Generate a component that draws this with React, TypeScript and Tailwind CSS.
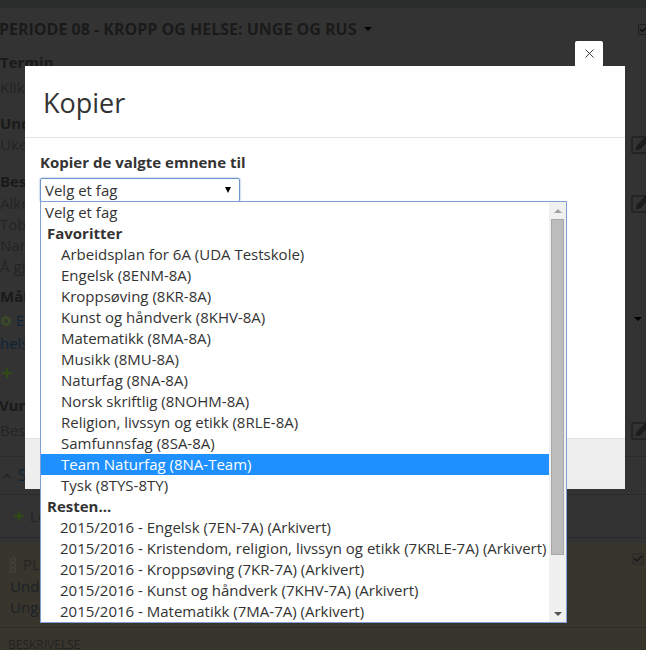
import { Check, ChevronUp, Pencil, Plus, X } from "lucide-react";

const favoritter = [
  "Arbeidsplan for 6A (UDA Testskole)",
  "Engelsk (8ENM-8A)",
  "Kroppsøving (8KR-8A)",
  "Kunst og håndverk (8KHV-8A)",
  "Matematikk (8MA-8A)",
  "Musikk (8MU-8A)",
  "Naturfag (8NA-8A)",
  "Norsk skriftlig (8NOHM-8A)",
  "Religion, livssyn og etikk (8RLE-8A)",
  "Samfunnsfag (8SA-8A)",
  "Team Naturfag (8NA-Team)",
  "Tysk (8TYS-8TY)",
];

const resten = [
  "2015/2016 - Engelsk (7EN-7A) (Arkivert)",
  "2015/2016 - Kristendom, religion, livssyn og etikk (7KRLE-7A) (Arkivert)",
  "2015/2016 - Kroppsøving (7KR-7A) (Arkivert)",
  "2015/2016 - Kunst og håndverk (7KHV-7A) (Arkivert)",
  "2015/2016 - Matematikk (7MA-7A) (Arkivert)",
];

function EditBox() {
  return (
    <div className="relative w-[20px] h-[18px] mt-[2px] mr-[-5px] border-2 border-[#242424] rounded-[2px]">
      <Pencil size={16} className="absolute left-[2px] top-[-3px] text-[#1d1d1d] fill-[#1d1d1d]" />
    </div>
  );
}

function Background() {
  return (
    <div className="absolute inset-0 bg-[#333333] text-[#242424] text-[15px] leading-[21px] overflow-hidden">
      <div className="h-[8px] bg-[#2b2d2d]" />
      <div className="flex items-center h-[42px]">
        <span className="font-bold text-[16px] text-[#1a1a1a] ml-[-1px]">PERIODE 08 - KROPP OG HELSE: UNGE OG RUS</span>
        <span className="ml-[8px] mt-[-1px] border-x-[4px] border-x-transparent border-t-[4px] border-t-black" />
        <div className="ml-auto w-[12px] h-[11px] mr-[-4px] border border-[#1d1d1d] rounded-[2px]">
          <Check size={9} className="text-[#111]" strokeWidth={4} />
        </div>
      </div>
      <div className="pt-[2px]">
        <div className="font-bold text-[#1a1a1a]">Termin</div>
        <div className="mt-[4px]">Klikk</div>
        <div className="font-bold text-[#1a1a1a] mt-[15px]">Undervisning</div>
        <div className="flex justify-between h-[21px]">
          <span>Uke</span>
          <EditBox />
        </div>
        <div className="font-bold text-[#1a1a1a] mt-[16px]">Beskrivelse</div>
        <div className="flex justify-between h-[21px] mt-[1px]">
          <span>Alkohol</span>
          <EditBox />
        </div>
        <div>Tobakk</div>
        <div>Narkotika</div>
        <div>Å gjøre</div>
        <div className="font-bold text-[#1a1a1a] mt-[9px]">Mål</div>
        <div className="flex items-center mt-[3px] justify-between">
          <span className="flex items-center pl-[1px]">
            <span className="inline-block w-[10px] h-[10px] rounded-full border-[3px] border-[#3a4a2a] mr-[5px]" />
            <span className="text-[#0d2438]">Elev</span>
          </span>
          <span className="border-x-[4px] border-x-transparent border-t-[4px] border-t-black mr-[4px] mb-[4px]" />
        </div>
        <div className="text-[#0d2438] mt-[2px]">helse</div>
        <Plus size={14} strokeWidth={4} className="text-[#2f4a17] mt-[12px]" />
        <div className="font-bold text-[#1a1a1a] mt-[15px] ml-[-1px]">Vurdering</div>
        <div className="flex justify-between h-[21px] mt-[4px]">
          <span>Beskriv</span>
          <EditBox />
        </div>
      </div>
      <div className="mt-[15px] border-t border-[#2b2b2b] h-[38px] flex items-center">
        <ChevronUp size={14} className="text-[#222]" />
        <span className="ml-[4px] text-[#0d2438] text-[16px]">Skjul</span>
      </div>
      <div className="border-t border-[#2b2b2b] h-[43px] flex items-center pl-[12px]">
        <Plus size={14} strokeWidth={4} className="text-[#2f4a17]" />
        <span className="ml-[4px] text-[#222]">Legg til</span>
      </div>
      <div className="border-t border-[#2b2b2b] h-[6px]" />
      <div className="bg-[#37352c] h-[85px] border-b border-[#2b2b2b] relative pl-[10px] pt-[11px]">
        <div className="flex items-center">
          <span className="flex flex-col w-[6px] mr-[7px]">
            <span className="h-[6px] rounded-full border border-[#48473c]" />
            <span className="h-[6px] rounded-full border border-[#48473c] -mt-[1px]" />
            <span className="h-[6px] rounded-full border border-[#48473c] -mt-[1px]" />
          </span>
          <span className="text-[#242424]">PLAN</span>
        </div>
        <div className="mt-[1px] text-[#1b2228]">Undervisning</div>
        <div className="text-[#1b2228]">Unge</div>
        <div className="absolute right-[2px] top-[10px] w-[12px] h-[12px] bg-[#33332c] border border-[#2a2a26] rounded-[2px]">
          <Check size={10} strokeWidth={4} className="text-[#1a1a1a]" />
        </div>
      </div>
      <div className="bg-[#37352c] h-[30px] pl-[8px] pt-[7px] text-[12px] leading-[20px] text-[#222]">BESKRIVELSE</div>
    </div>
  );
}

function Option({ text, selected }: { text: string; selected?: boolean }) {
  return (
    <div className={`h-[21px] leading-[21px] pl-[20px] whitespace-nowrap ${selected ? "bg-[#1e90ff] text-white" : "text-[#333]"}`}>
      {text}
    </div>
  );
}

function Dropdown() {
  return (
    <div className="absolute left-[15px] top-[135px] w-[527px] h-[422px] bg-white border border-[#7f9fd6] flex overflow-hidden text-[15px]">
      <div className="w-[508px] shrink-0 overflow-hidden">
        <div className="h-[21px] leading-[21px] pl-[4px] text-[#333]">Velg et fag</div>
        <div className="h-[21px] leading-[21px] pl-[6px] font-bold text-[#333]">Favoritter</div>
        {favoritter.map((f) => (
          <Option key={f} text={f} selected={f.startsWith("Team")} />
        ))}
        <div className="h-[21px] leading-[21px] pl-[6px] font-bold text-[#333]">Resten...</div>
        <div className="-ml-px">
          {resten.map((f) => (
            <Option key={f} text={f} />
          ))}
        </div>
      </div>
      <div className="w-[17px] shrink-0 bg-[#f0f0f0] flex flex-col items-center">
        <div className="h-[17px] flex items-center justify-center">
          <span className="border-x-[4px] border-x-transparent border-b-[4px] border-b-[#a3a3a3]" />
        </div>
        <div className="w-[13px] h-[336px] bg-[#bcbcbc] border border-[#a8a8a8]" />
        <div className="mt-auto h-[17px] flex items-center justify-center">
          <span className="border-x-[4px] border-x-transparent border-t-[4px] border-t-[#505050]" />
        </div>
      </div>
    </div>
  );
}

function Modal() {
  return (
    <div className="absolute left-[25px] top-[66px] w-[600px] h-[423px] bg-white flex flex-col">
      <div className="absolute right-[22px] top-[-25px] w-[28px] h-[25px] bg-white rounded-t-[2px] flex items-center justify-center">
        <X size={15} strokeWidth={1.5} className="text-[#333]" />
      </div>
      <div className="h-[72px] border-b border-[#e2e2e2] pl-[18px] pt-[3px] flex items-center">
        <h1 className="text-[27px] text-[#333]">Kopier</h1>
      </div>
      <div className="flex-1 relative px-[15px] pt-[14px]">
        <div className="font-bold text-[15px] leading-[20px] text-[#333]">Kopier de valgte emnene til</div>
        <div className="mt-[6px] w-[200px] h-[24px] border border-[#6f95cf] rounded-[2px] shadow-[0_0_2px_#6f95cf] flex items-center justify-between pl-[4px] pr-[8px] text-[15px] text-[#333]">
          <span>Velg et fag</span>
          <span className="border-x-[3.5px] border-x-transparent border-t-[6px] border-t-black" />
        </div>
      </div>
      <div className="h-[51px] bg-[#eeeeee] border-t border-[#e2e2e2]" />
      <Dropdown />
    </div>
  );
}

export default function App() {
  return (
    <div className="relative w-[646px] h-[650px] overflow-hidden font-['Open_Sans',sans-serif] text-[15px]">
      <Background />
      <Modal />
    </div>
  );
}
